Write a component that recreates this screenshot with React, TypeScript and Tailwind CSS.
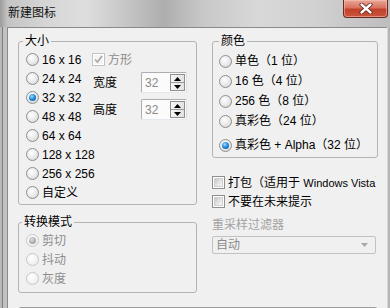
import React from "react";

function Radio({ checked = false, disabled = false }: { checked?: boolean; disabled?: boolean }) {
  return (
    <span
      className={`flex w-[13px] h-[13px] shrink-0 items-center justify-center rounded-full border ${
        disabled
          ? "border-[#c8c8c8] bg-[radial-gradient(circle_at_40%_35%,#ffffff_0%,#f2f2f2_60%,#e6e6e6_100%)]"
          : "border-[#8e8f8f] bg-[radial-gradient(circle_at_40%_35%,#ffffff_0%,#e8e8e8_55%,#c9c9c9_100%)]"
      }`}
    >
      {checked && (
        <span
          className={`w-[7px] h-[7px] rounded-full ${
            disabled
              ? "bg-[radial-gradient(circle_at_40%_35%,#e0e0e0_0%,#a8a8a8_60%,#8f8f8f_100%)]"
              : "bg-[radial-gradient(circle_at_40%_35%,#9fdcff_0%,#1f86d6_50%,#0a4a86_100%)]"
          }`}
        />
      )}
    </span>
  );
}

function Checkbox({ checked = false, disabled = false }: { checked?: boolean; disabled?: boolean }) {
  return (
    <span
      className={`flex w-[13px] h-[13px] shrink-0 items-center justify-center border p-px bg-white ${
        disabled ? "border-[#c3c3c3]" : "border-[#8e8f8f]"
      }`}
    >
      <span
        className={`relative flex w-full h-full items-center justify-center ${
          disabled
            ? "bg-[#f4f4f4]"
            : "bg-[linear-gradient(135deg,#c6c6c6_0%,#e2e2e2_50%,#f7f7f7_100%)] border border-[#d0d0d0]"
        }`}
      >
        {checked && (
          <svg width="11" height="11" viewBox="0 0 11 11" className="absolute">
            <path d="M2 5.5 L4.5 8 L9 2" fill="none" stroke="#a8a8a8" strokeWidth="1.6" />
          </svg>
        )}
      </span>
    </span>
  );
}

function SpinBox({ value }: { value: string }) {
  return (
    <div className="flex w-[46px] h-[21px] items-center rounded-[2px] border border-[#abadb3] border-b-[#e3e9ef] border-r-[#dbdfe6] bg-[#fbfbfb] pl-[3px] pr-px">
      <span className="flex-1 text-[#8a8a8a]">{value}</span>
      <div className="flex w-[15px] h-[17px] flex-col border border-[#8f8f8f] bg-[linear-gradient(90deg,#f6f6f6,#e2e2e2)]">
        <div className="flex flex-1 items-center justify-center border-b border-[#9a9a9a]">
          <svg width="7" height="4" viewBox="0 0 7 4">
            <path d="M0 4 L3.5 0 L7 4 Z" fill="#000" />
          </svg>
        </div>
        <div className="flex flex-1 items-center justify-center">
          <svg width="7" height="4" viewBox="0 0 7 4">
            <path d="M0 0 L3.5 4 L7 0 Z" fill="#000" />
          </svg>
        </div>
      </div>
    </div>
  );
}

const sizes = ["16 x 16", "24 x 24", "32 x 32", "48 x 48", "64 x 64", "128 x 128", "256 x 256", "自定义"];
const colors = ["单色（1 位）", "16 色（4 位）", "256 色（8 位）", "真彩色（24 位）"];

export default function App() {
  return (
    <div className="w-[390px] h-[308px] overflow-hidden flex flex-col bg-[linear-gradient(90deg,#9c9c9c_0%,#c4c4c4_2%,#d6d6d6_12%,#dedede_22%,#c2c2c2_34%,#aeaeae_42%,#c8c8c8_52%,#d8d8d8_66%,#d2d2d2_80%,#bdbdbd_100%)] font-['Liberation_Sans','Noto_Sans_CJK_SC',sans-serif] text-[12px] leading-[16px] text-black">
      {/* title bar */}
      <div className="flex h-[27px] shrink-0">
        <span className="pl-[8px] pt-[5px] text-[#111]">新建图标</span>
        <div className="ml-auto mr-[2px] flex w-[45px] h-[18px] items-center justify-center rounded-b-[4px] border border-t-0 border-[#6a2a1f] bg-[linear-gradient(180deg,#e9a898_0%,#d9735f_45%,#c2412a_55%,#c9553c_100%)] shadow-[inset_0_0_0_1px_rgba(255,200,190,0.5)]">
          <svg width="14" height="11" viewBox="0 0 14 11">
            <path d="M2.5 1.5 L11.5 9.5 M11.5 1.5 L2.5 9.5" stroke="#5a1a10" strokeWidth="4" strokeLinecap="round" />
            <path d="M2.5 1.5 L11.5 9.5 M11.5 1.5 L2.5 9.5" stroke="#ffffff" strokeWidth="2.4" strokeLinecap="round" />
          </svg>
        </div>
      </div>

      <div className="flex flex-1 min-h-0">
        <div className="w-[7px] shrink-0 flex">
          <div className="w-[2px] bg-[#b9b9b9]" />
          <div className="w-px bg-[#7c7c7c]" />
          <div className="flex-1 bg-[#c2c2c2]" />
        </div>

        <div className="flex flex-1 flex-col border-t border-l border-[#8a8a8a] bg-[#f0f0f0] pl-[10px] pt-[5px]">
          <div className="flex items-start gap-[15px]">
            {/* left column */}
            <div className="flex w-[179px] flex-col">
              <fieldset className="w-[179px] rounded-[3px] border border-[#b4b4b4]">
                <legend className="ml-[4px] px-[2px] h-[16px]">大小</legend>
                <div className="flex pt-px pb-[2px] pl-[7px]">
                  <div className="flex w-[66px] flex-col">
                    {sizes.map((s) => (
                      <div key={s} className="flex h-[19px] items-center gap-[3px] whitespace-nowrap">
                        <Radio checked={s === "32 x 32"} />
                        <span>{s}</span>
                      </div>
                    ))}
                  </div>
                  <div className="flex flex-col">
                    <div className="flex h-[19px] items-center gap-[3px]">
                      <Checkbox checked disabled />
                      <span className="text-[#8d8d8d]">方形</span>
                    </div>
                    <div className="mt-[3px] flex h-[21px] items-center">
                      <span className="w-[49px] pl-px">宽度</span>
                      <SpinBox value="32" />
                    </div>
                    <div className="mt-[6px] flex h-[21px] items-center">
                      <span className="w-[49px] pl-px">高度</span>
                      <SpinBox value="32" />
                    </div>
                  </div>
                </div>
              </fieldset>

              <fieldset className="mt-[9px] w-[179px] rounded-[3px] border border-[#b4b4b4]">
                <legend className="ml-[3px] px-[2px] h-[16px]">转换模式</legend>
                <div className="flex flex-col pt-px pb-[4px] pl-[7px] text-[#8d8d8d]">
                  <div className="flex h-[19px] items-center gap-[3px]">
                    <Radio checked disabled />
                    <span>剪切</span>
                  </div>
                  <div className="flex h-[19px] items-center gap-[3px]">
                    <Radio disabled />
                    <span>抖动</span>
                  </div>
                  <div className="flex h-[19px] items-center gap-[3px]">
                    <Radio disabled />
                    <span>灰度</span>
                  </div>
                </div>
              </fieldset>
            </div>

            {/* right column */}
            <div className="flex w-[166px] flex-col">
              <fieldset className="w-[166px] rounded-[3px] border border-[#b4b4b4]">
                <legend className="ml-[6px] px-[2px] h-[16px]">颜色</legend>
                <div className="flex flex-col pt-[2px] pb-[2px] pl-[6px]">
                  {colors.map((c) => (
                    <div key={c} className="flex h-[20px] items-center gap-[3px] whitespace-nowrap">
                      <Radio />
                      <span>{c}</span>
                    </div>
                  ))}
                  <div className="mt-[4px] flex h-[20px] items-center gap-[3px] whitespace-nowrap">
                    <Radio checked />
                    <span>真彩色 + Alpha（32 位）</span>
                  </div>
                </div>
              </fieldset>

              <div className="mt-[15px] flex h-[19px] w-[164px] items-center gap-[3px] overflow-hidden whitespace-nowrap">
                <Checkbox />
                <span>
                  打包（适用于 <span className="text-[11px]">Windows Vista</span>）
                </span>
              </div>
              <div className="flex h-[19px] items-center gap-[3px] whitespace-nowrap">
                <Checkbox />
                <span>不要在未来提示</span>
              </div>
              <div className="mt-[6px] h-[16px] text-[#a3a3a3]">重采样过滤器</div>
              <div className="mt-[3px] flex h-[18px] w-[164px] items-center justify-between rounded-[2px] border border-[#c2c2c2] bg-[#f0f0f0] pl-[3px] pr-[7px] text-[#8d8d8d]">
                <span>自动</span>
                <svg width="7" height="4" viewBox="0 0 7 4">
                  <path d="M0 0 L3.5 4 L7 0 Z" fill="#a8a8a8" />
                </svg>
              </div>
            </div>
          </div>

          <div className="mt-[14px] h-[12px] w-[360px] shrink-0 rounded-[3px] border border-[#9c9c9c] bg-[#f0f0f0]" />
        </div>

        <div className="w-[3px] shrink-0 flex">
          <div className="w-px bg-[#d8d8d8]" />
          <div className="flex-1 bg-[#b4b4b4]" />
        </div>
      </div>
    </div>
  );
}
